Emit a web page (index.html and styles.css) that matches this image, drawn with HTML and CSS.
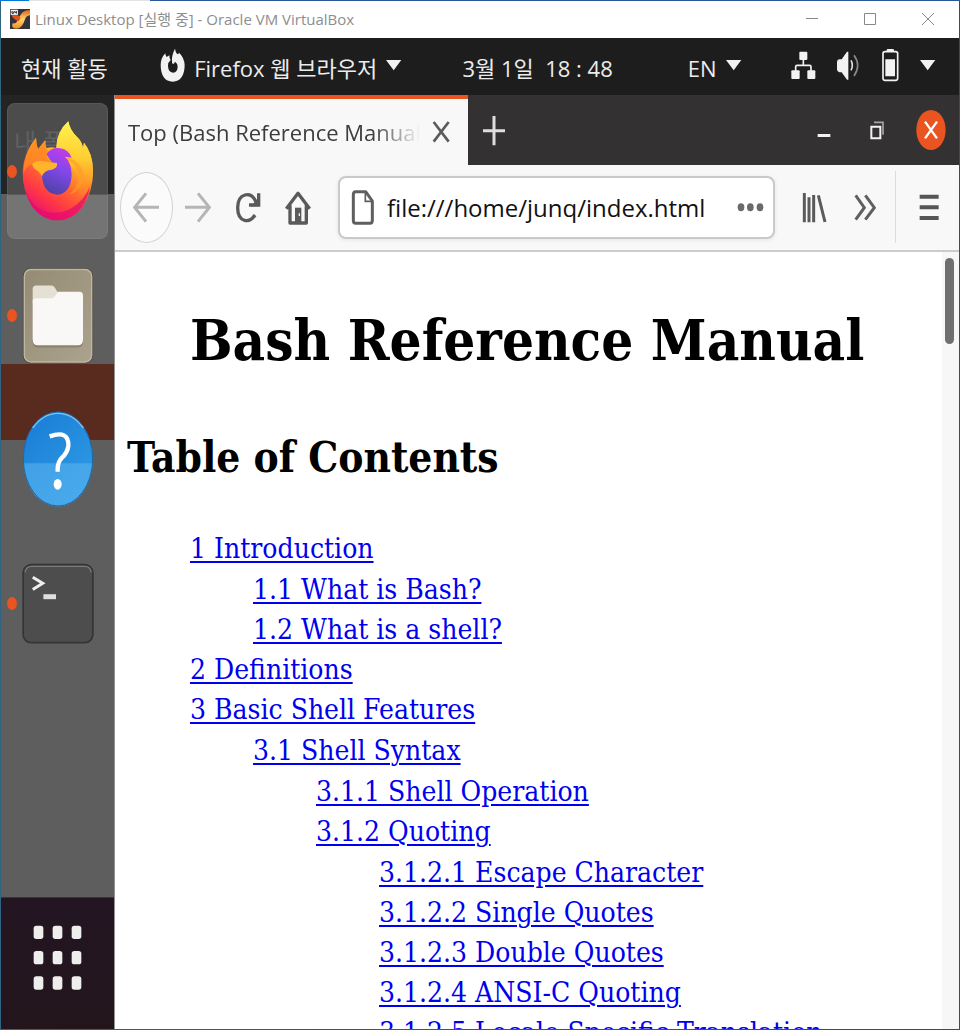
FILE: index.html
```html
<!DOCTYPE html>
<html lang="ko">
<head>
<meta charset="utf-8">
<title>Linux Desktop [실행 중] - Oracle VM VirtualBox</title>
<link rel="stylesheet" href="styles.css">
</head>
<body>
<div class="window">
  <header class="titlebar">
    <svg class="title-icon" viewBox="30 27 60 60" aria-hidden="true">
      <defs><linearGradient id="vb" x1="0" y1="0" x2="0" y2="1"><stop offset="0" stop-color="#d9651c"/><stop offset=".5" stop-color="#ffd76a"/><stop offset="1" stop-color="#ef8a1f"/></linearGradient></defs>
      <path fill="#31343f" d="M30 27h60v60H30z"/>
      <path fill="url(#vb)" d="M62 44q8-14 28-14v16q-12 2-15 12-3 12-10 20-6 8-16 8-9 0-12-6V70q12 2 16-8 3-12 9-18z"/>
      <path fill="#e0541c" d="M34 46l18-2 10 10-6 10q-14-4-22-18z"/>
      <path fill="#fff" stroke="#444" d="M32 29h22v16H32z"/>
      <path stroke="#333" stroke-width="3" fill="none" d="M36 33v7h5v-4h-4M44 33v4h6m-1-4v8"/>
    </svg>
    <span class="title-text">Linux Desktop [실행 중] - Oracle VM VirtualBox</span>
    <div class="title-controls">
      <button type="button" aria-label="최소화"><svg viewBox="0 0 12 12"><path d="M0 5.5h12"/></svg></button>
      <button type="button" aria-label="최대화"><svg viewBox="0 0 12 12"><path d="M.5.5h11v11H.5z"/></svg></button>
      <button type="button" aria-label="닫기"><svg viewBox="0 0 12 12"><path d="M0 0l12 12M12 0L0 12"/></svg></button>
    </div>
  </header>

  <nav class="panel">
    <button type="button">현재 활동</button>
    <button type="button" class="panel-app">
      <svg class="flame" viewBox="480 144 78 102" aria-hidden="true"><path fill="#f2f2f2" fill-rule="evenodd" d="M496 160q0 6 4 11l8-5q0 10 4 14-8 6-8 18 1 19 15 20 14-1 14-18 0-10-8-15-1 6-6 7-4-3-3-10-2-14 9-36 1 10 7 17 5-1 5-5 16 14 17 38-1 48-36 49-35-1-36-49 0-22 14-36z"/></svg>
      <span>Firefox 웹 브라우저</span>
      <svg class="caret" viewBox="1317 181 51 36" aria-hidden="true"><path fill="#f2f2f2" d="M1320 184h46l-23 31z"/></svg>
    </button>
    <button type="button">3월 1일&nbsp; 18 : 48</button>
    <div class="panel-end">
      <button type="button" class="lang"><span>EN</span><svg class="caret" viewBox="1317 181 51 36" aria-hidden="true"><path fill="#f2f2f2" d="M1320 184h46l-23 31z"/></svg></button>
      <button type="button" class="tray" aria-label="시스템 메뉴">
        <svg class="net" viewBox="927 148 78 90"><rect x="955" y="153" width="24" height="25" rx="3" fill="#f2f2f2"/><rect x="931" y="209" width="25" height="26" rx="3" fill="#f2f2f2"/><rect x="979" y="209" width="24" height="26" rx="3" fill="#f2f2f2"/><path d="M967 176v18M944 211v-13q0-4 4-4h38q4 0 4 4v13" fill="none" stroke="#f2f2f2" stroke-width="5"/></svg>
        <svg class="vol" viewBox="1065 150 75 90"><path fill="#f2f2f2" d="M1068 186q0-7 7-8h7l16-23h4v84h-4l-16-22h-7q-7-1-7-9z"/><path fill="none" stroke="#ddd" stroke-width="5" d="M1110 181q8 15 0 30"/><path fill="none" stroke="#888" stroke-width="5" d="M1119 166q22 30 0 62"/></svg>
        <svg class="bat" viewBox="1206 143 54 102"><rect x="1212" y="154" width="44" height="86" rx="6" fill="none" stroke="#f2f2f2" stroke-width="5"/><path fill="#f2f2f2" d="M1223 153v-4q0-3 4-3h14q4 0 4 3v4zM1219 177h29v51h-29z"/></svg>
        <svg class="caret" viewBox="1317 181 51 36"><path fill="#f2f2f2" d="M1320 184h46l-23 31z"/></svg>
      </button>
    </div>
  </nav>

  <div class="desktop">
    <aside class="dock">
      <span class="ghost" aria-hidden="true">내 폴</span>
      <ul class="launchers">
        <li class="running"><button type="button" class="active" aria-label="Firefox">
          <svg class="i-firefox" viewBox="66 72 216 300">
            <defs>
              <linearGradient id="ff1" x1=".75" y1=".1" x2=".3" y2="1"><stop offset="0" stop-color="#ffe83f"/><stop offset=".3" stop-color="#ffb52a"/><stop offset=".55" stop-color="#ff6a2e"/><stop offset=".78" stop-color="#ff3647"/><stop offset="1" stop-color="#e50f72"/></linearGradient>
              <linearGradient id="ff2" x1=".7" y1="0" x2=".4" y2="1"><stop offset="0" stop-color="#c43bea"/><stop offset=".45" stop-color="#8247ea"/><stop offset="1" stop-color="#4c43a4"/></linearGradient>
              <linearGradient id="ff3" x1="0" y1="0" x2="0" y2="1"><stop offset="0" stop-color="#fff350"/><stop offset=".45" stop-color="#ffcd31"/><stop offset=".8" stop-color="#ff8a27" stop-opacity=".8"/><stop offset="1" stop-color="#ff5a35" stop-opacity="0"/></linearGradient>
              <linearGradient id="ff4" x1="0" y1="0" x2="0" y2="1"><stop offset="0" stop-color="#ff961f"/><stop offset="1" stop-color="#ff7a2a"/></linearGradient>
            </defs>
            <path fill="url(#ff1)" d="M108 122q0 19 6 35l22-27q-1 15 4 23 15-5 29 0 0-48 36-80 4 25 24 45 17 15 20 36l3-17q26 32 27 83 1 64-33 112-30 38-73 38-44 0-73-38-34-47-32-112 3-51 40-98z"/>
            <path fill="#e50b70" opacity=".75" d="M76 275q20 60 66 70 60 12 106-40 14-18 24-44-7 42-27 71-30 38-73 38-44 0-73-38-18-24-23-57z"/>
            <path fill="url(#ff3)" d="M169 153q0-48 36-80 4 25 24 45 17 15 20 36l3-17q26 32 27 83 0 75-62 102 39-47 10-98-22-36-58-54z"/>
            <path fill="#ff9b26" opacity=".65" d="M190 188q40 3 45 48 2 34-28 56 38-5 42-55 0-38-44-56z"/>
            <path fill="url(#ff2)" d="M139 171q18-22 42-17 25 4 34 28l-20-3q20 18 20 55-3 56-43 59-42-3-46-55 1-35 34-36z"/>
            <path fill="url(#ff4)" d="M108 122q0 19 6 35l22-27q-1 22 7 32-8 9 0 31l-10 12-37-3q-22 10-26 30-1-58 38-110z"/>
            <path fill="#ffb42c" d="M96 202q14-16 46-7l29 3q3 15-15 20-23 1-30 20-10-16-17-19-10-5-13-17z"/>
          </svg></button></li>
        <li class="running"><button type="button" aria-label="파일">
          <svg class="i-files" viewBox="66 36 216 290">
            <defs><linearGradient id="fl" x1="0" y1="0" x2="1" y2="1"><stop offset="0" stop-color="#958b75"/><stop offset=".5" stop-color="#a09781"/><stop offset="1" stop-color="#aba38e"/></linearGradient></defs>
            <rect x="70" y="40" width="208" height="284" rx="22" fill="url(#fl)" stroke="#4d493f" stroke-width="3"/>
            <rect x="73" y="43" width="202" height="277" rx="20" fill="none" stroke="#bdb6a4" stroke-width="4"/>
            <path fill="#7d735e" opacity=".6" d="M97 253h152q2 24-16 24H114q-17 0-17-24z"/>
            <path fill="#e4e0d3" d="M98 135v-33q0-11 11-11h47q7 0 17 22v30H98z"/>
            <path fill="#f9f8f6" d="M98 139q0-10 10-10h48q7 0 17-19h66q10 0 10 12v130q0 18-15 18H113q-15 0-15-18z"/>
          </svg></button></li>
        <li><button type="button" aria-label="도움말">
          <svg class="i-help" viewBox="66 468 216 288">
            <defs><linearGradient id="hp" x1="0" y1="0" x2=".7" y2="1"><stop offset="0" stop-color="#187bd4"/><stop offset="1" stop-color="#2f9be5"/></linearGradient></defs>
            <ellipse cx="174" cy="612" rx="105" ry="142" fill="url(#hp)"/>
            <path fill="#58b3ee" opacity=".6" d="M70 625h208q-4 62-40 100-30 29-64 29-38 0-69-33-30-35-35-96z"/>
            <ellipse cx="174" cy="612" rx="104" ry="141" fill="none" stroke="#1d67a9" stroke-width="3"/>
            <path d="M98 519q32-44 76-44t76 44" fill="none" stroke="#7dc3f3" stroke-width="4"/>
            <path d="M149 544q58-20 56 28-2 20-20 37-12 13-12 34v7" fill="none" stroke="#fff" stroke-width="13"/>
            <ellipse cx="173" cy="688" rx="12" ry="16" fill="#fff"/>
          </svg></button></li>
        <li class="running"><button type="button" aria-label="터미널">
          <svg class="i-term" viewBox="66 68 216 244">
            <rect x="69" y="73" width="210" height="235" rx="24" fill="#4d4d4d" stroke="#353535" stroke-width="5"/>
            <path d="M75 96q2-18 20-18h160q16 0 19 18" fill="none" stroke="#7c7c7c" stroke-width="4"/>
            <path d="M98 111l30 18-30 19" fill="none" stroke="#eee" stroke-width="9"/><path fill="#dedede" d="M130 162h38v15h-38z"/>
          </svg></button></li>
      </ul>
      <button type="button" class="apps" aria-label="프로그램 표시">
        <svg viewBox="100 130 147 201"><g fill="#eeeeec"><rect x="102" y="135" width="29" height="40" rx="8"/><rect x="159" y="135" width="29" height="40" rx="8"/><rect x="216" y="135" width="29" height="40" rx="8"/><rect x="102" y="211" width="29" height="40" rx="8"/><rect x="159" y="211" width="29" height="40" rx="8"/><rect x="216" y="211" width="29" height="40" rx="8"/><rect x="102" y="287" width="29" height="40" rx="8"/><rect x="159" y="287" width="29" height="40" rx="8"/><rect x="216" y="287" width="29" height="40" rx="8"/></g></svg>
      </button>
    </aside>

    <main class="browser">
      <div class="tabstrip">
        <div class="tab">
          <span class="tab-title">Top (Bash Reference Manual)</span>
          <button type="button" aria-label="탭 닫기"><svg class="tab-x" viewBox="965 91 54 66"><path d="M970 94l45 59M1015 94l-45 59" fill="none" stroke="#5c5c5c" stroke-width="8"/></svg></button>
        </div>
        <button type="button" class="newtab" aria-label="새 탭"><svg class="plus" viewBox="1117 70 72 93"><path d="M1120 117h66M1153 73v88" fill="none" stroke="#dedede" stroke-width="9"/></svg></button>
        <div class="win-controls">
          <button type="button" aria-label="최소화"><svg class="wmin" viewBox="860 90 42 69"><path fill="#f2f2f2" d="M862 135h38v9h-38z"/></svg></button>
          <button type="button" aria-label="복원"><svg class="wres" viewBox="1020 96 42 57"><path d="M1024 113h27v35h-27z" fill="none" stroke="#f2f2f2" stroke-width="6"/><path d="M1032 100h27v37" fill="none" stroke="#a5a5a5" stroke-width="5"/></svg></button>
          <button type="button" aria-label="닫기"><svg class="wclose" viewBox="1157 61 90 126"><ellipse cx="1202" cy="124" rx="44" ry="60" fill="#e95420"/><path d="M1184 99l36 50M1220 99l-36 50" fill="none" stroke="#fff" stroke-width="7"/></svg></button>
        </div>
      </div>

      <div class="toolbar">
        <button type="button" class="back" aria-label="뒤로"><svg class="arrow" viewBox="67 305 81 93"><path d="M145 351H74M106 309l-34 42 34 43" fill="none" stroke="#b5b5b5" stroke-width="9"/></svg></button>
        <button type="button" class="forward" aria-label="앞으로"><svg class="arrow" viewBox="224 305 81 93"><path d="M227 351h71M266 309l34 42-34 43" fill="none" stroke="#b5b5b5" stroke-width="9"/></svg></button>
        <button type="button" class="reload" aria-label="새로 고침"><svg class="arrow" viewBox="378 305 81 93"><path d="M438 374q-13 21-31 16-21-6-21-38 0-32 22-38 21-6 33 21" fill="none" stroke="#5a5a5a" stroke-width="10"/><path d="M449 309v35h-29" fill="none" stroke="#5a5a5a" stroke-width="10"/><path fill="#5a5a5a" d="M448 322v26h-22z"/></svg></button>
        <button type="button" class="home" aria-label="홈"><svg class="house" viewBox="527 300 81 105"><path d="M531 356l35-46 35 46M542 346v53h49v-53" fill="none" stroke="#5a5a5a" stroke-width="10" stroke-linejoin="round"/><path fill="#5a5a5a" d="M557 353h19v46h-19z"/><path fill="#eee" d="M568 370h4v8h-4z"/></svg></button>
        <div class="urlbox">
          <svg class="doc" viewBox="720 300 72 105" aria-hidden="true"><path d="M764 305h-30q-7 0-7 9v77q0 9 7 9h43q7 0 7-9v-58z" fill="none" stroke="#5f5f5f" stroke-width="9" stroke-linejoin="round"/><path d="M763 306v28h21" fill="none" stroke="#5f5f5f" stroke-width="5"/></svg>
          <input type="text" aria-label="주소" value="file:///home/junq/index.html">
          <button type="button" aria-label="페이지 작업"><svg class="dots" viewBox="623 336 81 33"><g fill="#6a6a6a"><ellipse cx="635" cy="352" rx="10" ry="12"/><ellipse cx="663" cy="352" rx="10" ry="12"/><ellipse cx="692" cy="352" rx="10" ry="12"/></g></svg></button>
        </div>
        <button type="button" class="library" aria-label="라이브러리"><svg class="lib" viewBox="817 305 75 93"><path d="M824 308v88M838 321v75M852 314v82M866 315l20 80" fill="none" stroke="#5a5a5a" stroke-width="9"/></svg></button>
        <button type="button" class="more" aria-label="더 보기"><svg class="chev" viewBox="972 311 66 81"><path d="M977 315l26 37-26 36M1006 315l27 37-27 36" fill="none" stroke="#5f5f5f" stroke-width="9"/></svg></button>
        <button type="button" class="menu" aria-label="메뉴"><svg class="burger" viewBox="1167 309 60 84"><path fill="#555" d="M1169 314h57v12h-57zM1169 346h57v12h-57zM1169 378h57v12h-57z"/></svg></button>
      </div>

      <div class="viewport">
        <article class="page">
          <h1>Bash Reference Manual</h1>
          <h2>Table of Contents</h2>
          <ul class="toc">
            <li><a href="#1">1 Introduction</a>
              <ul>
                <li><a href="#1.1">1.1 What is Bash?</a></li>
                <li><a href="#1.2">1.2 What is a shell?</a></li>
              </ul></li>
            <li><a href="#2">2 Definitions</a></li>
            <li><a href="#3">3 Basic Shell Features</a>
              <ul>
                <li><a href="#3.1">3.1 Shell Syntax</a>
                  <ul>
                    <li><a href="#3.1.1">3.1.1 Shell Operation</a></li>
                    <li><a href="#3.1.2">3.1.2 Quoting</a>
                      <ul>
                        <li><a href="#3.1.2.1">3.1.2.1 Escape Character</a></li>
                        <li><a href="#3.1.2.2">3.1.2.2 Single Quotes</a></li>
                        <li><a href="#3.1.2.3">3.1.2.3 Double Quotes</a></li>
                        <li><a href="#3.1.2.4">3.1.2.4 ANSI-C Quoting</a></li>
                        <li><a href="#3.1.2.5">3.1.2.5 Locale-Specific Translation</a></li>
                      </ul></li>
                  </ul></li>
              </ul></li>
          </ul>
        </article>
        <div class="scrollbar"><div class="thumb"></div></div>
      </div>
    </main>
  </div>
</div>
</body>
</html>
```

FILE: styles.css
```css
* { box-sizing: border-box; }
body { margin: 0; font-family: "Open Sans", "Noto Sans CJK KR", sans-serif; }
button { margin: 0; padding: 0; border: 0; background: none; font: inherit; color: inherit; }
svg { display: block; flex: none; }

.window {
  display: flex;
  flex-direction: column;
  height: 100vh;
  padding: 1px;
  background:
    linear-gradient(90deg, #0078d7 29px, #e3e3e3 29px, #e3e3e3 150px, #2b579a 150px) top / 100% 1px no-repeat,
    linear-gradient(90deg, #2f6482, #2f4a84);
}

/* Host window title bar */
.titlebar { display: flex; align-items: center; flex: none; height: 37px; padding: 0 2px 2px 9px; background: #fff; }
.title-icon { width: 20px; height: 20px; margin-right: 5px; }
.title-text { font-size: 15px; color: #8e8e8e; }
.title-controls { display: flex; margin-left: auto; }
.title-controls button { display: grid; place-items: center; width: 58px; height: 34px; }
.title-controls svg { width: 12px; height: 12px; fill: none; stroke: #888; stroke-width: 1; }

/* Guest desktop panel */
.panel {
  display: grid;
  grid-template-columns: 139fr 302fr 225fr 248fr;
  align-items: center;
  flex: none;
  height: 57px;
  padding: 3px 23px 0 20px;
  background: #1d1d1d;
  color: #ececec;
  font-size: 22px;
  line-height: 32px;
  white-space: nowrap;
}
.panel button { text-align: left; }
.panel svg { margin-bottom: 6px; }
.panel-app, .lang, .tray, .panel-end { display: flex; align-items: center; }
.panel-app, .lang { gap: 8px; }
.panel-end { justify-content: space-between; }
.tray { gap: 20px; }
.flame { width: 26px; height: 34px; }
.caret { width: 17px; height: 12px; }
.net { width: 26px; height: 30px; }
.vol { width: 25px; height: 30px; }
.bat { width: 18px; height: 34px; }

.desktop { display: flex; flex: 1; min-height: 0; }

.dock {
  position: relative;
  display: flex;
  flex-direction: column;
  justify-content: space-between;
  flex: none;
  width: 114px;
  border-right: 1px solid #929292;
  background: linear-gradient(#242424 99px, #5e5e5e 99px, #5e5e5e 269px, #582b1e 269px, #582b1e 345px, #5e5e5e 345px);
}
.ghost { position: absolute; left: 13px; top: 31px; font-size: 24px; line-height: 32px; color: #777; }
.launchers { display: flex; flex-direction: column; gap: 8px; margin: 0; padding: 8px 6px; list-style: none; }
.launchers li { position: relative; }
.launchers button { display: grid; place-items: center; width: 101px; height: 136px; border-radius: 8px; }
.launchers .active { background: rgba(90, 90, 90, .75); box-shadow: inset 0 0 0 1px rgba(140, 140, 140, .2); }
.launchers .active::after { content: ""; position: absolute; inset: 92px 0 0; border-radius: 0 0 8px 8px; background: rgba(180, 180, 180, .3); z-index: 0; }
.launchers svg { position: relative; z-index: 1; }
.running::before { content: ""; position: absolute; z-index: 2; left: 0; top: 62px; width: 10px; height: 13px; border-radius: 50%; background: #e95420; }
.i-firefox { width: 72px; height: 100px; }
.i-files { width: 72px; height: 97px; }
.i-help { width: 72px; height: 96px; }
.i-term { width: 72px; height: 81px; }
.apps { display: grid; justify-items: center; align-content: start; height: 132px; padding-top: 26px; border-top: 1px solid #3a3338; background: linear-gradient(#231522, #22161c); }
.apps svg { width: 49px; height: 67px; }

/* Browser */
.browser { display: flex; flex-direction: column; flex: 1; min-width: 0; background: #fff; }
.tabstrip { display: flex; align-items: center; flex: none; height: 70px; background: #333132; }
.tab {
  display: flex;
  align-items: center;
  justify-content: space-between;
  width: 353px;
  height: 70px;
  padding: 0 18px 0 13px;
  border-top: 4px solid #e95420;
  background: #f8f8f8;
  color: #3d3d3d;
}
.tab-title { width: 292px; overflow: hidden; font-size: 22px; line-height: 34px; white-space: nowrap; mask-image: linear-gradient(90deg, #000 84%, transparent); }
.tab-x { width: 18px; height: 22px; }
.newtab { margin-left: 14px; }
.plus { width: 24px; height: 31px; }
.win-controls { display: flex; align-items: center; margin-left: auto; padding-right: 13px; }
.win-controls button + button { margin-left: 39px; }
.win-controls button:last-child { margin-left: 32px; }
.wmin { width: 14px; height: 23px; }
.wres { width: 14px; height: 19px; }
.wclose { width: 30px; height: 42px; }

.toolbar { display: flex; align-items: center; flex: none; height: 87px; padding: 0 0 1px 5px; border-bottom: 2px solid #ccc; background: #f8f8f8; }
.back { display: grid; place-items: center; width: 53px; height: 71px; border: 1px solid #d2d2d2; border-radius: 50%; background: #fbfbfb; }
.arrow { width: 27px; height: 31px; }
.forward { margin-left: 11px; }
.reload { margin-left: 24px; }
.home { margin-left: 23px; }
.house { width: 27px; height: 35px; }
.urlbox { display: flex; align-items: center; flex: 1; min-width: 0; height: 63px; margin-left: 26px; padding: 0 9px 0 11px; border: 2px solid #c9c9c9; border-radius: 8px; background: #fff; box-shadow: 0 1px 4px rgba(0, 0, 0, .08); }
.doc { width: 24px; height: 35px; }
.urlbox input { flex: 1; min-width: 0; margin: 0 8px 0 12px; padding: 2px 0 0; border: 0; outline: 0; background: none; color: #111; font: 24px/34px "Open Sans", sans-serif; }
.dots { width: 27px; height: 11px; }
.library { margin-left: 27px; }
.lib { width: 25px; height: 31px; }
.more { margin-left: 27px; }
.chev { width: 22px; height: 27px; }
.menu { display: grid; place-items: center; width: 64px; height: 72px; margin-left: 19px; padding-left: 2px; border-left: 1px solid #dcdcdc; }
.burger { width: 20px; height: 28px; }

.viewport { display: flex; flex: 1; min-height: 0; overflow: hidden; }
.page { flex: 1; min-width: 0; padding: 0 12px; color: #000; font-family: "DejaVu Serif Condensed", "DejaVu Serif", serif; }
.page h1 { margin: 52px 0 0 63px; font-size: 56px; line-height: 72px; white-space: nowrap; }
.page h2 { margin: 50px 0 0; font-size: 42px; line-height: 64px; }
.toc { margin: 39px 0 0; font-size: 28px; line-height: 40px; }
.toc, .toc ul { padding-left: 63px; list-style: none; }
.toc ul { margin: 1px 0 0; }
.toc a { color: #0000ee; text-decoration: underline; text-decoration-thickness: 2px; text-underline-offset: 3px; }
.scrollbar { flex: none; width: 17px; padding: 6px 5px 0 3px; background: #f7f7f7; }
.thumb { height: 86px; border-radius: 5px; background: #6f6f6f; }
```
